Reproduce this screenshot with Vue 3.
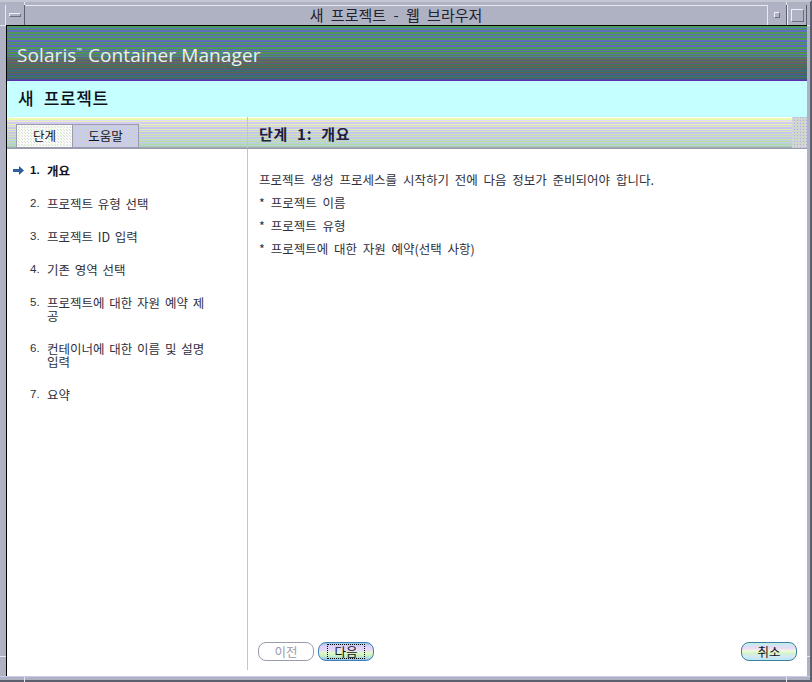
<script setup>
const steps = [
  { n: '1.', label: '개요', current: true },
  { n: '2.', label: '프로젝트 유형 선택' },
  { n: '3.', label: '프로젝트 ID 입력' },
  { n: '4.', label: '기존 영역 선택' },
  { n: '5.', label: '프로젝트에 대한 자원 예약 제공' },
  { n: '6.', label: '컨테이너에 대한 이름 및 설명 입력' },
  { n: '7.', label: '요약' },
]
const stripes = (colors) =>
  'linear-gradient(to bottom,' +
  colors.map((c, i) => `${c} ${i}px,${c} ${i + 1}px`).join(',') +
  ')'
const bannerColors = [
  '#4f9a55','#4f9a6a','#5a72c0','#4f9a50','#5f6cc0','#5f6cc0','#4f9a50','#4f9a60','#5f68c0','#4f9a50',
  '#4f8a90','#5f68c0','#4f9a50','#4f9a50','#5f6cc0','#5f68c0','#4f9a50','#5a72b8','#4f9a50','#5f68c0',
  '#5f68c0','#4f9a55','#4f9a50','#5f68c0','#4f9a50','#5f68b8','#4f9450','#4f9450','#5f68b0','#4f8a50',
  '#4f8a80','#5f5f98','#4f8050','#6a6a50','#5a5a90','#4f7a50','#6a6450','#5f5a88','#40785a','#6a5f50',
  '#3f7060','#66604f','#3a6a78','#5a5a80','#3f7058','#3a6a80','#665f50','#3a6a78','#55558a','#3a7060',
  '#3a6a90','#556850','#3a6a70','#4a4a9f','#5a30b0',
]
const stepColors = [
  '#ffffff','#e8ffb0','#e8ffa8','#e4d8f8','#e0f4b8','#d8c8f4','#d8c8f4','#e0f4b0','#d4d0f0','#d8ecb0',
  '#ccc4f0','#ccc4f0','#dcecb8','#c8c8f0','#d4ecb4','#c8c4ec','#c8c4ec','#d0e8b0','#c4c4e8','#cce4b0',
  '#c4c8e8','#c4c8e8','#c4e4a8','#c0cce4','#bce0a8','#bcd0d8','#bcd0d8','#b4dca8','#b8d0d0','#a8d0b8',
  '#a0a8b0',
]
const bannerBg = stripes(bannerColors)
const stepBg = stripes(stepColors)
const ticks = [
  { left: '24px', top: '0', width: '1px', height: '5px' },
  { left: '786px', top: '0', width: '1px', height: '5px' },
  { left: '0', top: '25px', width: '6px', height: '1px' },
  { left: '807px', top: '25px', width: '5px', height: '1px' },
  { left: '0', top: '656px', width: '6px', height: '1px' },
  { left: '807px', top: '656px', width: '5px', height: '1px' },
  { left: '24px', top: '677px', width: '1px', height: '5px' },
  { left: '786px', top: '677px', width: '1px', height: '5px' },
]
</script>

<template>
  <div class="window">
    <span v-for="(t, i) in ticks" :key="i" class="tick" :style="t"></span>
    <header class="titlebar">
      <div class="tb-btn tb-menu"><span class="menu-glyph"></span></div>
      <div class="tb-title">새 프로젝트 - 웹 브라우저</div>
      <div class="tb-btn tb-min"><span class="min-glyph"></span></div>
      <div class="tb-btn tb-max"><span class="max-glyph"></span></div>
    </header>
    <div class="frame">
      <div class="banner" :style="{ backgroundImage: bannerBg }">
        <span class="brand">Solaris<sup>™</sup> Container Manager</span>
      </div>
      <div class="heading">새 프로젝트</div>
      <div class="tabrow" :style="{ backgroundImage: stepBg }">
        <div class="tabs">
          <div class="tab tab-on">단계</div>
          <div class="tab tab-off">도움말</div>
        </div>
        <div class="step-title">단계 1: 개요</div>
        <div class="dither"></div>
      </div>
      <div class="main">
        <nav class="side">
          <div v-for="s in steps" :key="s.n" class="step" :class="{ current: s.current }">
            <span class="arrow">
              <svg v-if="s.current" width="11" height="9" viewBox="0 0 11 9">
                <path d="M0 3h6V0l5 4.5L6 9V6H0z" fill="#2f5f9f" />
              </svg>
            </span>
            <span class="num">{{ s.n }}</span>
            <span class="lbl">{{ s.label }}</span>
          </div>
        </nav>
        <section class="content">
          <div class="text">
            <p>프로젝트 생성 프로세스를 시작하기 전에 다음 정보가 준비되어야 합니다.</p>
            <p>* 프로젝트 이름</p>
            <p>* 프로젝트 유형</p>
            <p>* 프로젝트에 대한 자원 예약(선택 사항)</p>
          </div>
          <div class="buttons">
            <button class="btn disabled">이전</button>
            <button class="btn primary"><span class="focus">다음</span></button>
            <button class="btn cancel">취소</button>
          </div>
        </section>
      </div>
    </div>
    <div class="bottom"></div>
  </div>
</template>

<style>
html, body { margin: 0; background: #aeb2c3; }
</style>

<style scoped>
.window {
  position: relative;
  width: 812px;
  height: 682px;
  box-sizing: border-box;
  background: #aeb2c3;
  border-top: 2px solid #c4c7d4;
  border-right: 2px solid #5c5f6e;
  display: flex;
  flex-direction: column;
  overflow: hidden;
  font-family: "Noto Sans CJK KR", "Liberation Sans", sans-serif;
  color: #1c1c28;
}
.tick {
  position: absolute;
  margin-top: -2px;
  background: #e8e8f0;
}
.titlebar {
  height: 24px;
  flex: none;
  display: flex;
  box-sizing: border-box;
  padding: 3px 3px 0 5px;
  border-bottom: 1px solid #000;
  background: #aeb2c3;
}
.tb-btn {
  width: 20px;
  flex: none;
  box-sizing: border-box;
  border-left: 1px solid #e8e8f0;
  border-right: 1px solid #5c5f6e;
  display: flex;
  align-items: center;
  justify-content: center;
}
.tb-title {
  flex: 1;
  box-sizing: border-box;
  border-top: 1px solid #e8e8f0;
  text-align: center;
  font-size: 15px;
  line-height: 17px;
  word-spacing: 4px;
  color: #222230;
}
.menu-glyph {
  width: 12px;
  height: 4px;
  box-sizing: border-box;
  border: 1px solid #6c6f7e;
  border-top-color: #f0f0f6;
  border-left-color: #f0f0f6;
}
.min-glyph {
  width: 4px;
  height: 4px;
  border: 1px solid #6c6f7e;
  border-top-color: #f0f0f6;
  border-left-color: #f0f0f6;
}
.max-glyph {
  width: 11px;
  height: 11px;
  border: 1px solid #6c6f7e;
  border-top-color: #f0f0f6;
  border-left-color: #f0f0f6;
}
.frame {
  flex: 1;
  min-height: 0;
  margin: 0 3px 0 6px;
  border-left: 1px solid #000;
  display: flex;
  flex-direction: column;
  background: #fff;
}
.banner {
  height: 55px;
  flex: none;
  box-sizing: border-box;
  padding: 17px 0 0 10px;
}
.brand {
  font-family: "Open Sans", "Liberation Sans", sans-serif;
  font-size: 19px;
  letter-spacing: 0.1px;
  line-height: 25px;
  color: #ecf2ee;
  display: block;
}
.brand sup {
  font-size: 7px;
  line-height: 0;
  vertical-align: 9px;
  margin-right: 1px;
}
.heading {
  height: 36px;
  flex: none;
  background: #c5ffff;
  box-sizing: border-box;
  padding-left: 11px;
  font-size: 17px;
  line-height: 33px;
  font-weight: 500;
  letter-spacing: 0.6px;
  word-spacing: 5px;
  color: #101018;
}
.tabrow {
  height: 31px;
  flex: none;
  display: flex;
  background-size: 100% 31px;
  background-repeat: no-repeat;
}
.tabs {
  width: 241px;
  flex: none;
  box-sizing: border-box;
  border-right: 1px solid #c8c8a8;
  display: flex;
  padding: 7px 0 0 9px;
}
.tab {
  height: 24px;
  box-sizing: border-box;
  border: 1px solid #9a9cae;
  font-size: 12.5px;
  line-height: 22px;
  text-align: center;
  color: #14141e;
}
.tab-on {
  width: 56px;
  border-right: none;
  background-color: #f8fbf4;
  background-image: radial-gradient(#c8ecc0 0.7px, transparent 0.8px), radial-gradient(#e8ccf4 0.7px, transparent 0.8px);
  background-size: 3px 3px;
  background-position: 0 0, 1px 1px;
}
.tab-off {
  width: 67px;
  background-color: #ccccea;
  background-image: radial-gradient(#bce0a8 0.7px, transparent 0.8px);
  background-size: 3px 3px;
}
.step-title {
  flex: 1;
  padding-left: 11px;
  font-size: 15px;
  font-weight: 700;
  line-height: 33px;
  word-spacing: 5px;
  letter-spacing: 0.7px;
  color: #20203a;
}
.dither {
  width: 15px;
  flex: none;
  background-color: #d0d4d8;
  background-image: radial-gradient(#c0ee9c 0.8px, transparent 0.9px), radial-gradient(#b8a8e0 0.8px, transparent 0.9px);
  background-size: 3px 3px;
  background-position: 0 0, 1px 2px;
}
.main {
  flex: 1;
  min-height: 0;
  display: flex;
  border-top: 1px solid #9a9cae;
  background: #fff;
}
.side {
  width: 241px;
  flex: none;
  box-sizing: border-box;
  border-right: 1px solid #c8c8b0;
  margin-bottom: 6px;
  padding-top: 15px;
  font-size: 12.5px;
}
.step {
  display: flex;
  align-items: flex-start;
  line-height: 13px;
  margin-bottom: 20px;
  padding-right: 35px;
  color: #30303c;
}
.arrow {
  width: 23px;
  flex: none;
  padding-left: 6px;
  box-sizing: border-box;
  display: flex;
  align-items: center;
  height: 13px;
}
.num {
  width: 17px;
  flex: none;
  font-family: "Liberation Sans", sans-serif;
  font-size: 11.5px;
}
.lbl { flex: 1; word-break: break-all; word-spacing: 2px; }
.current { color: #14141e; font-weight: 700; }
.current .num { font-weight: 700; }
.content {
  flex: 1;
  min-width: 0;
  display: flex;
  flex-direction: column;
  justify-content: space-between;
  padding: 0 10px 15px 10px;
}
.text {
  padding: 22px 0 0 1px;
  font-size: 12.5px;
  word-spacing: 3px;
  color: #30303c;
}
.text p { margin: 0 0 5px; line-height: 18px; height: 18px; }
.buttons { display: flex; gap: 4px; }
.btn {
  width: 56px;
  height: 19px;
  padding: 0;
  border-radius: 8px;
  font-family: inherit;
  font-size: 12.5px;
  line-height: 15px;
  box-sizing: border-box;
  color: #101018;
  border: 1px solid #3f7f9f;
  display: flex;
  align-items: center;
  justify-content: center;
}
.disabled {
  border: 1px solid #9a9cae;
  background: #fff;
  color: #9a9cae;
}
.primary {
  background: linear-gradient(to bottom, #9cc8f0 0, #d8d0f8 3px, #e8d8f8 7px, #e0f8c8 10px, #c8f0c0 13px, #9cc8f0 16px);
  border-color: #3f7fb8;
}
.focus {
  width: 38px;
  height: 15px;
  box-sizing: border-box;
  border: 1px dotted #000;
  line-height: 13px;
  text-align: center;
}
.cancel {
  margin-left: auto;
  background: linear-gradient(to bottom, #c0f0e8 0, #e8d8f8 5px, #f4f8e0 8px, #d0f8c0 10px, #d8e8f8 13px, #b8e8f0 17px);
}
.bottom {
  height: 6px;
  flex: none;
  box-sizing: border-box;
  border-top: 1px solid #ccccee;
  border-bottom: 2px solid #5c5f6e;
  background: #aeb2c3;
}
</style>
